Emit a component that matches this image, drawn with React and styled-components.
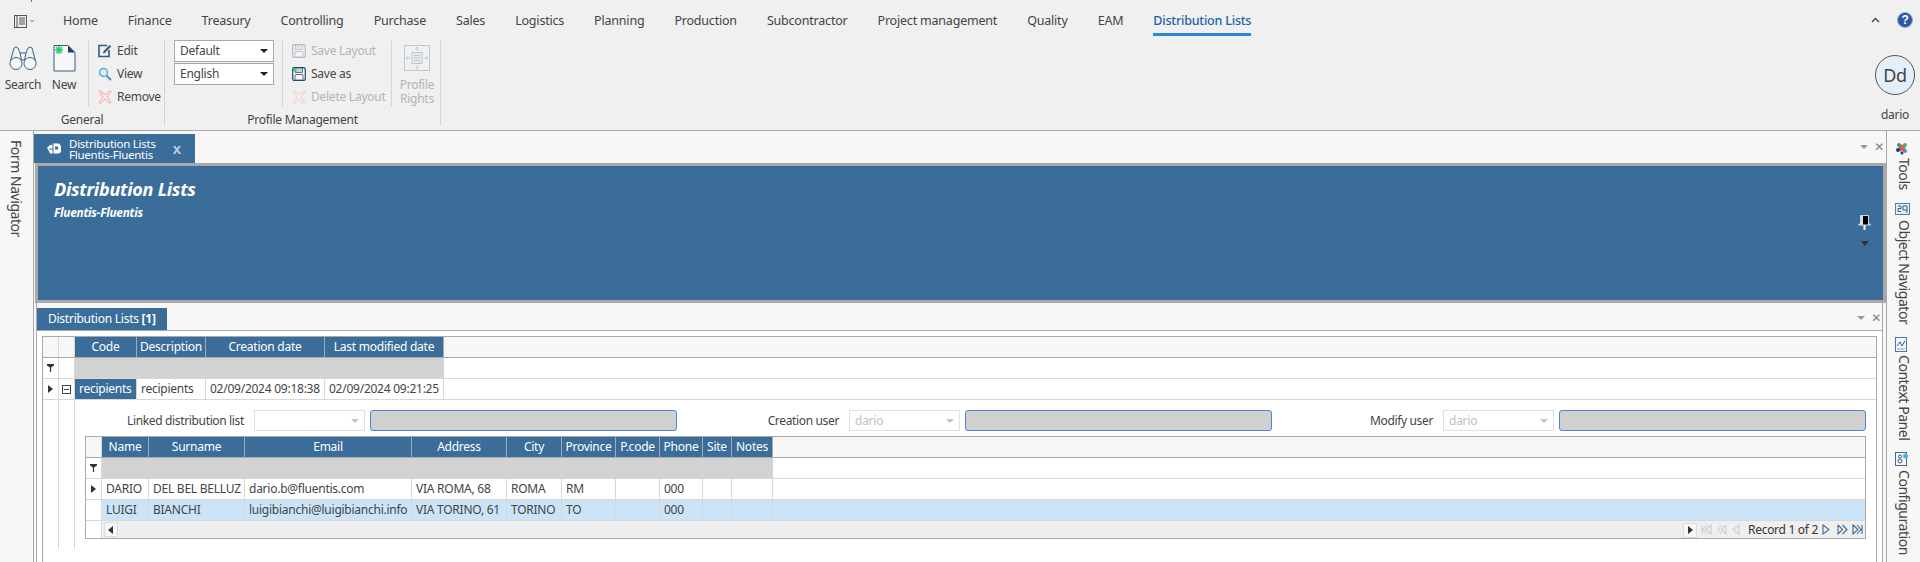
import React from "react";
import styled, { createGlobalStyle } from "styled-components";

const BLUE = "#3a6d9a";
const LINE = "#a9a9a9";
const TOP_COLS = "16px 16px 62px 69px 119px 119px 1fr";
const SUB_COLS = "16px 47px 96px 167px 95px 55px 54px 44px 43px 29px 41px 1fr";

function Binoculars() {
    return (
        <svg width="28" height="26" viewBox="0 0 28 26" fill="none" stroke="#3f5f80" strokeWidth="1">
            <circle cx="7" cy="18.5" r="6" fill="#f7f9fb" />
            <circle cx="21" cy="18.5" r="6" fill="#f7f9fb" />
            <path d="M1.5 16 L5 3 Q7 1 9 3 L11 8 L12.5 15 M26.5 16 L23 3 Q21 1 19 3 L17 8 L15.5 15 M11 8 H17 M12.5 15 H15.5" />
        </svg>
    );
}

function NewDoc() {
    return (
        <svg width="23" height="27" viewBox="0 0 23 27">
            <path d="M1 .5 H15 L22 7.5 V26 H1 Z" fill="#f5f7f9" stroke="#3a5c80" />
            <path d="M15 .5 L22 7.5 H15 Z" fill="#1f3f66" />
            <path d="M6 1 V9 M2 5 H10 M3 2 L9 8 M9 2 L3 8" stroke="#2fd06a" strokeWidth="1.6" />
        </svg>
    );
}

function EditIcon() {
    return (
        <svg width="14" height="14" viewBox="0 0 14 14" fill="none">
            <path d="M9 1.5 H1 V12.5 H11 V6" stroke="#2f5b88" strokeWidth="1.6" />
            <path d="M5 9.5 L5.6 7 L11.5 1 L13.2 2.6 L7.2 8.8 Z" fill="#3f5f80" />
        </svg>
    );
}

function ViewIcon() {
    return (
        <svg width="14" height="14" viewBox="0 0 14 14" fill="none">
            <circle cx="5.5" cy="5.5" r="4" fill="#d6ecf6" stroke="#57a7cf" strokeWidth="1.3" />
            <path d="M8.5 8.5 L13 13" stroke="#4f93bd" strokeWidth="2" />
        </svg>
    );
}

function RemoveIcon({ faded }) {
    return (
        <svg width="14" height="14" viewBox="0 0 14 14" fill="none" opacity={faded ? 0.45 : 1}>
            <path d="M1 1.5 L2.5 .7 L7 5 L11.5 .7 L13 1.5 L8.8 7 L13 12.5 L11.5 13.3 L7 9 L2.5 13.3 L1 12.5 L5.2 7 Z" fill="#fdf3f3" stroke="#f09aa0" />
        </svg>
    );
}

function FloppyIcon({ faded, dot }) {
    return (
        <svg width="14" height="14" viewBox="0 0 14 14" fill="none" opacity={faded ? 0.3 : 1}>
            <path d="M2 .7 H12 L13.3 2 V12 Q13.3 13.3 12 13.3 H2 Q.7 13.3 .7 12 V2 Q.7 .7 2 .7 Z" fill="#f4f6f8" stroke="#26466c" strokeWidth="1.2" />
            <rect x="3.5" y="1" width="7" height="4.5" fill="#c7d3df" stroke="#26466c" strokeWidth=".7" />
            <rect x="3" y="7.5" width="8" height="5.5" rx="1" fill="#fff" stroke="#26466c" strokeWidth=".8" />
            {dot && <rect x="1" y="1" width="3.5" height="3.5" fill="#2fd06a" />}
        </svg>
    );
}

function RightsIcon() {
    return (
        <svg width="26" height="26" viewBox="0 0 26 26" fill="none" stroke="#bcc8d4">
            <rect x=".5" y=".5" width="25" height="25" />
            <rect x="8" y="7.5" width="10" height="11" fill="#e6eaee" />
            <path d="M10 10.5 H16 M10 13 H16 M10 15.5 H16 M13 2 V6 M13 20 V24 M2 13 H6 M20 13 H24" />
            <path d="M11.5 3.5 L13 2 L14.5 3.5 M11.5 22.5 L13 24 L14.5 22.5 M3.5 11.5 L2 13 L3.5 14.5 M22.5 11.5 L24 13 L22.5 14.5" />
        </svg>
    );
}

function MenuIcon() {
    return (
        <svg width="21" height="13" viewBox="0 0 21 13" fill="none" stroke="#555">
            <rect x=".5" y=".5" width="12" height="12" />
            <path d="M3 .5 V12.5 M5 3 H11 M5 5 H11 M5 7 H11 M5 9 H11" />
            <path d="M15.5 5 H20.5 L18 7.5 Z" fill="#aaa" stroke="none" />
        </svg>
    );
}

function ChevronUp() {
    return (
        <svg width="9" height="6" viewBox="0 0 9 6" fill="none" stroke="#444" strokeWidth="1.4">
            <path d="M1 5 L4.5 1.5 L8 5" />
        </svg>
    );
}

function HelpIcon() {
    return (
        <svg width="16" height="16" viewBox="0 0 16 16">
            <circle cx="8" cy="8" r="7.5" fill="#2f56a8" stroke="#9aa8c4" />
            <text x="8" y="12.4" textAnchor="middle" fontFamily="Liberation Sans" fontWeight="700" fontSize="12" fill="#fff">?</text>
        </svg>
    );
}

function PanelGlyph() {
    return (
        <svg width="14" height="11" viewBox="0 0 14 11">
            <path d="M0 5 L3 2 L5 2 L6 .5 L12 .5 L14 3 V9 L12 10.5 H3 L2 8 Z" fill="#fff" />
            <path d="M6 1 V10.5 M2 6 H6" stroke="#3a6d9a" />
            <rect x="8" y="3.5" width="3" height="3" fill="#3a6d9a" />
        </svg>
    );
}

function Pin() {
    return (
        <svg width="13" height="15" viewBox="0 0 13 15">
            <path d="M2.5 .5 H10.5 V8 L12.5 10 H.5 L2.5 8 Z" fill="#d8e0e8" stroke="#cfd6dd" />
            <rect x="5" y="1" width="5" height="8.5" fill="#000" />
            <rect x="5.5" y="10" width="2" height="5" fill="#fff" />
        </svg>
    );
}

function Funnel() {
    return (
        <svg width="7" height="8" viewBox="0 0 7 8">
            <path d="M0 0 H7 V1.5 L4.1 3.5 V8 H2.9 V3.5 L0 1.5 Z" fill="#333" />
        </svg>
    );
}

function Arrow() {
    return (
        <svg width="5" height="8" viewBox="0 0 5 8">
            <path d="M0 0 L5 4 L0 8 Z" fill="#333" />
        </svg>
    );
}

function ToolsGlyph() {
    return (
        <svg width="14" height="14" viewBox="0 0 14 14">
            <circle cx="7" cy="7" r="3.5" fill="#e25a5a" />
            <circle cx="4" cy="4" r="2" fill="#2a9d7f" />
            <circle cx="10" cy="4" r="2" fill="#3fb57a" />
            <circle cx="3" cy="9" r="2" fill="#1f3f66" />
            <circle cx="10" cy="10" r="2" fill="#4f93bd" />
            <circle cx="7" cy="12" r="1.5" fill="#1f3f66" />
        </svg>
    );
}

function ObjectGlyph() {
    return (
        <svg width="15" height="12" viewBox="0 0 15 12" fill="none">
            <rect x=".5" y=".5" width="14" height="11" fill="#e8eef4" stroke="#5c7a99" />
            <path d="M3 3 H6 V5.5 H3 V8.5 H6 M8 3 H12 V7 H8 Z M12 7 V10" stroke="#3a5c80" />
        </svg>
    );
}

function ContextGlyph() {
    return (
        <svg width="12" height="15" viewBox="0 0 12 15" fill="none">
            <rect x=".5" y=".5" width="11" height="14" fill="#f2f6fa" stroke="#4a79a8" />
            <path d="M2 9 L5 5 L7 9 L10 4" stroke="#2f5b88" />
            <path d="M2 12 H10" stroke="#7fa0c0" />
        </svg>
    );
}

function ConfigGlyph() {
    return (
        <svg width="14" height="14" viewBox="0 0 14 14" fill="none">
            <rect x=".5" y=".5" width="11" height="13" fill="#f2f6fa" stroke="#4a6a8c" />
            <circle cx="5" cy="9" r="2" stroke="#3a5c80" />
            <circle cx="5" cy="4.5" r="1.5" stroke="#3a5c80" />
            <circle cx="10.5" cy="4" r="2.5" fill="#4fb0d8" />
        </svg>
    );
}

function PagerIcon({ kind, faded }) {
    const colour = faded ? "#c3cfdb" : "#3a6d9a";
    const shapes = {
        first: "M1 1 V10 M10 1 L5 5.5 L10 10 Z M6 1 L2 5.5 L6 10",
        prev: "M6 1 L2 5.5 L6 10 M10 1 L5.5 5.5 L10 10 V1",
        back: "M8 1 L2 5.5 L8 10 Z",
        next: "M1 1 L7 5.5 L1 10 Z",
        forward: "M1 1 L5.5 5.5 L1 10 V1 M5.5 1 L10 5.5 L5.5 10",
        last: "M10 1 V10 M1 1 L6 5.5 L1 10 Z M5 1 L9 5.5 L5 10",
    };
    return (
        <svg width="11" height="11" viewBox="0 0 11 11" fill="none" stroke={colour} strokeWidth="1.1">
            <path d={shapes[kind]} />
        </svg>
    );
}

const tabs = ["Home", "Finance", "Treasury", "Controlling", "Purchase", "Sales", "Logistics", "Planning", "Production", "Subcontractor", "Project management", "Quality", "EAM"];
const recipients = [
    ["DARIO", "DEL BEL BELLUZ", "dario.b@fluentis.com", "VIA ROMA, 68", "ROMA", "RM", "", "000", "", ""],
    ["LUIGI", "BIANCHI", "luigibianchi@luigibianchi.info", "VIA TORINO, 61", "TORINO", "TO", "", "000", "", ""],
];

function App() {
    return (
        <Page>
            <GlobalStyle />
            <TopTick />
            <Ribbon>
                <TabRow>
                    <MenuButton><MenuIcon /></MenuButton>
                    <Tabs>
                        {tabs.map((t) => <RibbonTab key={t}>{t}</RibbonTab>)}
                        <RibbonTab $active>Distribution Lists</RibbonTab>
                    </Tabs>
                    <TabTools>
                        <ChevronUp />
                        <HelpIcon />
                    </TabTools>
                </TabRow>
                <RibbonBody>
                    <RibbonGroup $width={165}>
                        <GroupBody>
                            <LargeButton $width={46}><IconSlot><Binoculars /></IconSlot><LargeLabel>Search</LargeLabel></LargeButton>
                            <LargeButton $width={36}><IconSlot><NewDoc /></IconSlot><LargeLabel>New</LargeLabel></LargeButton>
                            <Separator $after={9} />
                            <SmallColumn $width={65}>
                                <SmallButton><EditIcon />Edit</SmallButton>
                                <SmallButton><ViewIcon />View</SmallButton>
                                <SmallButton><RemoveIcon />Remove</SmallButton>
                            </SmallColumn>
                        </GroupBody>
                        <GroupLabel>General</GroupLabel>
                    </RibbonGroup>
                    <RibbonGroup $width={276}>
                        <GroupBody>
                            <ComboColumn>
                                <RibbonCombo>Default<ComboCaret /></RibbonCombo>
                                <RibbonCombo>English<ComboCaret /></RibbonCombo>
                            </ComboColumn>
                            <Separator $after={9} />
                            <SmallColumn $width={93}>
                                <SmallButton $disabled><FloppyIcon faded />Save Layout</SmallButton>
                                <SmallButton><FloppyIcon dot />Save as</SmallButton>
                                <SmallButton $disabled><RemoveIcon faded />Delete Layout</SmallButton>
                            </SmallColumn>
                            <Separator $after={1} />
                            <LargeButton $width={48} $disabled><IconSlot><RightsIcon /></IconSlot><LargeLabel>Profile<br />Rights</LargeLabel></LargeButton>
                        </GroupBody>
                        <GroupLabel>Profile Management</GroupLabel>
                    </RibbonGroup>
                    <UserBox>
                        <Avatar>Dd</Avatar>
                        <UserName>dario</UserName>
                    </UserBox>
                </RibbonBody>
            </Ribbon>
            <Workspace>
                <LeftRail><RailText>Form Navigator</RailText></LeftRail>
                <Main>
                    <DocStrip>
                        <DocTab>
                            <PanelGlyph />
                            <DocTitle>Distribution Lists<br />Fluentis-Fluentis</DocTitle>
                            <DocClose>x</DocClose>
                        </DocTab>
                        <StripTools $right={2} $top={10}><DropCaret /><CloseMark>✕</CloseMark></StripTools>
                    </DocStrip>
                    <Banner>
                        <BannerTitle>Distribution Lists</BannerTitle>
                        <BannerSub>Fluentis-Fluentis</BannerSub>
                        <PinBox><Pin /><PinCaret /></PinBox>
                    </Banner>
                    <SectionStrip>
                        <SectionTab>Distribution Lists <b>[1]</b></SectionTab>
                        <StripTools $right={1} $top={9}><DropCaret /><CloseMark>✕</CloseMark></StripTools>
                    </SectionStrip>
                    <Section>
                        <MasterGrid>
                            <GridRow $cols={TOP_COLS}>
                                <CornerCell /><CornerCell />
                                <HeadCell>Code</HeadCell>
                                <HeadCell>Description</HeadCell>
                                <HeadCell>Creation date</HeadCell>
                                <HeadCell>Last modified date</HeadCell>
                                <HeadRest />
                            </GridRow>
                            <GridRow $cols={TOP_COLS} $strong>
                                <MarkCell><Funnel /></MarkCell>
                                <Cell />
                                <FilterFill $span={4} />
                                <Cell $bare />
                            </GridRow>
                            <GridRow $cols={TOP_COLS}>
                                <MarkCell><Arrow /></MarkCell>
                                <MarkCell><ExpandBox /></MarkCell>
                                <Cell $focused>recipients</Cell>
                                <Cell>recipients</Cell>
                                <Cell>02/09/2024 09:18:38</Cell>
                                <Cell>02/09/2024 09:21:25</Cell>
                                <Cell $bare />
                            </GridRow>
                            <DetailRow>
                                <DetailGutter />
                                <DetailGutter />
                                <DetailBody>
                                    <FormRow>
                                        <FormGroup $label={174}>
                                            <FieldLabel>Linked distribution list</FieldLabel>
                                            <FieldCombo><ComboCaret $light /></FieldCombo>
                                            <FieldBox />
                                        </FormGroup>
                                        <FormGroup $label={167}>
                                            <FieldLabel>Creation user</FieldLabel>
                                            <FieldCombo>dario<ComboCaret $light /></FieldCombo>
                                            <FieldBox />
                                        </FormGroup>
                                        <FormGroup $label={166}>
                                            <FieldLabel>Modify user</FieldLabel>
                                            <FieldCombo>dario<ComboCaret $light /></FieldCombo>
                                            <FieldBox />
                                        </FormGroup>
                                    </FormRow>
                                    <DetailGrid>
                                        <GridRow $cols={SUB_COLS}>
                                            <CornerCell />
                                            {["Name", "Surname", "Email", "Address", "City", "Province", "P.code", "Phone", "Site", "Notes"].map((h) => <HeadCell key={h}>{h}</HeadCell>)}
                                            <HeadRest />
                                        </GridRow>
                                        <GridRow $cols={SUB_COLS} $strong>
                                            <MarkCell><Funnel /></MarkCell>
                                            <FilterFill $span={10} />
                                            <Cell $bare />
                                        </GridRow>
                                        {recipients.map((r, i) => (
                                            <GridRow key={r[0]} $cols={SUB_COLS} $selected={i === 1}>
                                                <MarkCell>{i === 0 && <Arrow />}</MarkCell>
                                                {r.map((v, j) => <Cell key={j}>{v}</Cell>)}
                                                <Cell $bare />
                                            </GridRow>
                                        ))}
                                        <ScrollRow>
                                            <ScrollGutter />
                                            <ScrollBar>
                                                <ScrollButton $flip><Arrow /></ScrollButton>
                                                <Pager>
                                                    <ScrollButton><Arrow /></ScrollButton>
                                                    <PagerIcon kind="first" faded />
                                                    <PagerIcon kind="prev" faded />
                                                    <PagerIcon kind="back" faded />
                                                    <PagerText>Record 1 of 2</PagerText>
                                                    <PagerIcon kind="next" />
                                                    <PagerIcon kind="forward" />
                                                    <PagerIcon kind="last" />
                                                </Pager>
                                            </ScrollBar>
                                        </ScrollRow>
                                    </DetailGrid>
                                </DetailBody>
                            </DetailRow>
                        </MasterGrid>
                    </Section>
                </Main>
                <RightRail>
                    <RailItem $gap={3}><ToolsGlyph /><RailText>Tools</RailText></RailItem>
                    <RailItem $gap={5} $top={13}><RailIcon><ObjectGlyph /></RailIcon><RailText>Object Navigator</RailText></RailItem>
                    <RailItem $gap={3} $top={13}><ContextGlyph /><RailText>Context Panel</RailText></RailItem>
                    <RailItem $gap={4} $top={12}><RailIcon><ConfigGlyph /></RailIcon><RailText>Configuration</RailText></RailItem>
                </RightRail>
            </Workspace>
        </Page>
    );
}

export default App;

const GlobalStyle = createGlobalStyle`
    html, body {
        margin: 0;
        padding: 0;
        background: #f7f7f7;
    }
    * {
        box-sizing: border-box;
    }
    svg {
        flex: none;
    }
`;

const Page = styled.div`
    position: relative;
    width: 1920px;
    height: 562px;
    overflow: hidden;
    display: flex;
    flex-direction: column;
    font-family: "Noto Sans", "Open Sans", sans-serif;
    font-size: 12px;
    letter-spacing: -0.25px;
    color: #444;
`;

const TopTick = styled.div`
    position: absolute;
    left: 31px;
    top: 0;
    width: 1px;
    height: 2px;
    background: #3a7fc4;
`;

const Ribbon = styled.div`
    flex: none;
    height: 131px;
    background: #f0f0f0;
    border-bottom: 1px solid ${LINE};
`;

const TabRow = styled.div`
    height: 40px;
    display: flex;
    align-items: flex-start;
`;

const MenuButton = styled.div`
    width: 48px;
    padding: 15px 0 0 14px;
`;

const Tabs = styled.div`
    display: flex;
    gap: 30px;
    margin-left: 15px;
`;

const RibbonTab = styled.div`
    height: 36px;
    padding-top: 12px;
    font-size: 12.5px;
    line-height: 18px;
    letter-spacing: -0.2px;
    color: ${(p) => (p.$active ? "#1b62a8" : "#444")};
    font-weight: ${(p) => (p.$active ? 500 : 400)};
    border-bottom: ${(p) => (p.$active ? "3px solid #2b88d8" : "none")};
`;

const TabTools = styled.div`
    margin-left: auto;
    padding: 12px 7px 0 0;
    display: flex;
    align-items: center;
    gap: 17px;
`;

const RibbonBody = styled.div`
    display: flex;
    align-items: flex-start;
`;

const RibbonGroup = styled.div`
    width: ${(p) => p.$width}px;
    height: 86px;
    flex: none;
    border-right: 1px solid #d4d4d4;
    display: flex;
    flex-direction: column;
`;

const GroupBody = styled.div`
    height: 66px;
    display: flex;
    flex: none;
`;

const GroupLabel = styled.div`
    text-align: center;
    line-height: 16px;
    margin-top: 6px;
`;

const LargeButton = styled.div`
    width: ${(p) => p.$width}px;
    flex: none;
    display: flex;
    flex-direction: column;
    align-items: center;
    padding-top: 5px;
    color: ${(p) => (p.$disabled ? "#b4b4b4" : "#444")};
`;

const IconSlot = styled.div`
    height: 27px;
    line-height: 0;
`;

const LargeLabel = styled.div`
    margin-top: 6px;
    line-height: 14px;
    text-align: center;
`;

const Separator = styled.div`
    width: 1px;
    flex: none;
    height: 65px;
    margin: 1px ${(p) => p.$after}px 0 6px;
    background: #d4d4d4;
`;

const SmallColumn = styled.div`
    width: ${(p) => p.$width}px;
    flex: none;
    margin-top: -1px;
`;

const SmallButton = styled.div`
    height: 23px;
    display: flex;
    align-items: center;
    gap: 5px;
    white-space: nowrap;
    color: ${(p) => (p.$disabled ? "#b4b4b4" : "#444")};
`;

const ComboColumn = styled.div`
    margin: 0 2px 0 9px;
    display: flex;
    flex-direction: column;
    gap: 1px;
`;

const RibbonCombo = styled.div`
    position: relative;
    width: 100px;
    height: 22px;
    background: #fff;
    border: 1px solid ${LINE};
    padding-left: 5px;
    line-height: 20px;
    display: flex;
    align-items: center;
    justify-content: space-between;
`;

const ComboCaret = styled.span`
    width: 0;
    height: 0;
    margin-right: 5px;
    margin-left: auto;
    border-style: solid;
    border-width: 4px 4px 0;
    border-color: ${(p) => (p.$light ? "#c4c4c4" : "#222")} transparent transparent;
`;

const UserBox = styled.div`
    margin-left: auto;
    width: 50px;
    display: flex;
    flex-direction: column;
    align-items: center;
    padding-top: 15px;
`;

const Avatar = styled.div`
    width: 40px;
    height: 40px;
    border-radius: 50%;
    border: 1px solid #555;
    background: #e3eff9;
    display: flex;
    align-items: center;
    justify-content: center;
    font-size: 18px;
    color: #444;
`;

const UserName = styled.div`
    margin-top: 12px;
    line-height: 16px;
`;

const Workspace = styled.div`
    flex: 1;
    min-height: 0;
    display: flex;
`;

const LeftRail = styled.div`
    width: 33px;
    flex: none;
    padding: 9px 0 0 7px;
`;

const RailText = styled.div`
    writing-mode: vertical-rl;
    font-size: 14px;
    line-height: 18px;
    letter-spacing: -0.45px;
    white-space: nowrap;
`;

const Main = styled.div`
    width: 1854px;
    flex: none;
    border-left: 1px solid ${LINE};
    border-right: 1px solid ${LINE};
    display: flex;
    flex-direction: column;
`;

const DocStrip = styled.div`
    position: relative;
    height: 32px;
    flex: none;
    padding-top: 3px;
`;

const DocTab = styled.div`
    width: 161px;
    height: 29px;
    background: ${BLUE};
    color: #fff;
    display: flex;
    align-items: center;
    padding-left: 13px;
`;

const DocTitle = styled.div`
    margin-left: 8px;
    font-size: 11.5px;
    line-height: 11px;
    white-space: nowrap;
`;

const DocClose = styled.span`
    margin-left: 17px;
    font-family: "Liberation Sans", sans-serif;
    font-weight: 700;
    font-size: 15px;
    color: #c3d0dc;
`;

const StripTools = styled.div`
    position: absolute;
    right: ${(p) => p.$right}px;
    top: ${(p) => p.$top}px;
    display: flex;
    align-items: center;
    gap: 6px;
`;

const DropCaret = styled.span`
    width: 0;
    height: 0;
    border-style: solid;
    border-width: 4px 4px 0;
    border-color: #999 transparent transparent;
`;

const CloseMark = styled.span`
    font-family: "DejaVu Sans", sans-serif;
    font-size: 12px;
    line-height: 12px;
    color: #808080;
`;

const Banner = styled.div`
    position: relative;
    flex: none;
    height: 140px;
    margin-left: 1px;
    border: 3px solid ${LINE};
    background: ${BLUE};
    color: #fff;
    padding: 12px 0 0 16px;
    font-style: italic;
    font-weight: 700;
`;

const BannerTitle = styled.div`
    font-size: 18px;
    line-height: 22px;
`;

const BannerSub = styled.div`
    margin-top: 4px;
    font-size: 11.8px;
    line-height: 16px;
`;

const PinBox = styled.div`
    position: absolute;
    right: 12px;
    top: 49px;
    width: 13px;
    display: flex;
    flex-direction: column;
    align-items: center;
    line-height: 0;
`;

const PinCaret = styled.span`
    margin-top: 11px;
    width: 0;
    height: 0;
    border-style: solid;
    border-width: 5px 4px 0;
    border-color: #333 transparent transparent;
`;

const SectionStrip = styled.div`
    position: relative;
    flex: none;
    height: 28px;
    margin: 0 3px 0 2px;
    padding: 5px 0 0;
    border-left: 1px solid ${LINE};
    border-right: 1px solid ${LINE};
    border-bottom: 1px solid ${LINE};
`;

const SectionTab = styled.div`
    width: 130px;
    height: 22px;
    background: ${BLUE};
    color: #fff;
    line-height: 22px;
    padding-left: 11px;
    white-space: nowrap;
    b {
        font-weight: 700;
    }
`;

const Section = styled.div`
    flex: 1;
    min-height: 0;
    margin: 0 3px 0 2px;
    padding: 5px 5px 0;
    background: #fff;
    border-left: 1px solid ${LINE};
    border-right: 1px solid ${LINE};
`;

const MasterGrid = styled.div`
    height: 260px;
    border: 1px solid ${LINE};
    background: #fff;
`;

const DetailGrid = styled.div`
    margin: 5px 10px 0;
    border: 1px solid ${LINE};
    background: #fff;
`;

const GridRow = styled.div`
    display: grid;
    grid-template-columns: ${(p) => p.$cols};
    height: 21px;
    background: ${(p) => (p.$selected ? "#cce4f7" : "#fff")};
    border-bottom: 1px solid ${(p) => (p.$strong ? "#d8d8d8" : LINE)};
    &:nth-child(n + 3) {
        border-bottom-color: #d8d8d8;
    }
`;

const CornerCell = styled.div`
    background: #f7f7f7;
    border-right: 1px solid #d8d8d8;
`;

const HeadCell = styled.div`
    background: ${BLUE};
    color: #fff;
    text-align: center;
    line-height: 20px;
    white-space: nowrap;
    border-right: 1px solid ${LINE};
`;

const HeadRest = styled.div`
    background: #f7f7f7;
`;

const MarkCell = styled.div`
    display: flex;
    align-items: center;
    justify-content: center;
    background: #fff;
    border-right: 1px solid #d8d8d8;
`;

const FilterFill = styled.div`
    grid-column: span ${(p) => p.$span};
    background: #d2d2d2;
`;

const Cell = styled.div`
    line-height: 20px;
    padding-left: 4px;
    white-space: nowrap;
    overflow: hidden;
    background: ${(p) => (p.$focused ? BLUE : "transparent")};
    color: ${(p) => (p.$focused ? "#fff" : "#444")};
    border-right: ${(p) => (p.$bare ? "none" : "1px solid #d8d8d8")};
`;

const ExpandBox = styled.span`
    position: relative;
    width: 9px;
    height: 9px;
    border: 1px solid #444;
    &::after {
        content: "";
        position: absolute;
        left: 1px;
        right: 1px;
        top: 3px;
        height: 1px;
        background: #444;
    }
`;

const DetailRow = styled.div`
    display: grid;
    grid-template-columns: 16px 16px 1fr;
    height: 149px;
`;

const DetailGutter = styled.div`
    border-right: 1px solid #d8d8d8;
`;

const DetailBody = styled.div`
    padding-top: 10px;
    min-width: 0;
`;

const FormRow = styled.div`
    display: flex;
    height: 21px;
`;

const FormGroup = styled.div`
    display: grid;
    grid-template-columns: ${(p) => p.$label}px 111px 307px;
    column-gap: 5px;
    flex: none;
`;

const FieldLabel = styled.div`
    text-align: right;
    padding-right: 5px;
    line-height: 21px;
    letter-spacing: -0.35px;
    white-space: nowrap;
`;

const FieldCombo = styled.div`
    display: flex;
    align-items: center;
    padding-left: 5px;
    border: 1px solid #e0e0e0;
    color: #c0c0c0;
    background: #fff;
`;

const FieldBox = styled.div`
    background: #d0d0d0;
    border: 1px solid #4a86d8;
    border-radius: 3px;
`;

const ScrollRow = styled.div`
    display: grid;
    grid-template-columns: 16px 1fr;
    height: 17px;
`;

const ScrollGutter = styled.div`
    background: #fff;
    border-right: 1px solid #d8d8d8;
`;

const ScrollBar = styled.div`
    display: flex;
    justify-content: space-between;
    background: #efefef;
    padding-left: 2px;
`;

const ScrollButton = styled.span`
    width: 14px;
    height: 15px;
    margin-top: 1px;
    display: flex;
    align-items: center;
    justify-content: center;
    background: #f7f7f7;
    border: 1px solid #dcdcdc;
    transform: ${(p) => (p.$flip ? "scaleX(-1)" : "none")};
`;

const Pager = styled.div`
    display: flex;
    align-items: center;
    gap: 4px;
    padding-right: 2px;
`;

const PagerText = styled.span`
    margin: 0 0 0 2px;
    color: #333;
    letter-spacing: -0.3px;
    white-space: nowrap;
`;

const RightRail = styled.div`
    width: 33px;
    flex: none;
    padding: 10px 0 0 8px;
    display: flex;
    flex-direction: column;
    align-items: flex-start;
`;

const RailItem = styled.div`
    display: flex;
    flex-direction: column;
    align-items: flex-start;
    gap: ${(p) => p.$gap}px;
    margin-top: ${(p) => p.$top || 0}px;
    line-height: 0;
`;

const RailIcon = styled.div`
    line-height: 0;
`;
